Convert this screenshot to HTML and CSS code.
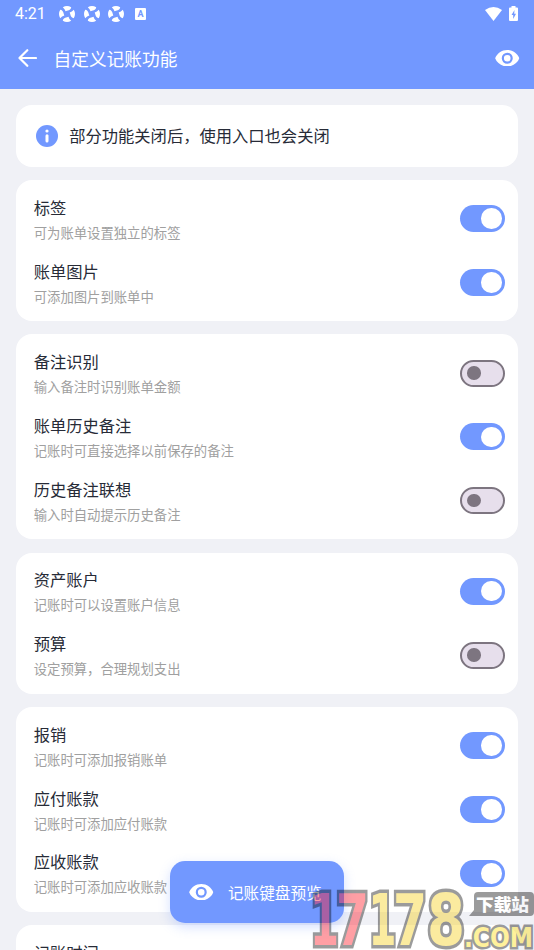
FILE: index.html
```html
<!DOCTYPE html>
<html lang="zh-CN">
<head>
<meta charset="utf-8">
<title>自定义记账功能</title>
<link rel="stylesheet" href="styles.css">
</head>
<body>
<svg class="defs" aria-hidden="true">
  <symbol id="eye" viewBox="1 4.5 22 15"><path d="M12 4.5C7 4.5 2.73 7.61 1 12c1.73 4.39 6 7.5 11 7.5s9.27-3.11 11-7.5c-1.73-4.39-6-7.5-11-7.5zM12 17a5 5 0 1 1 0-10 5 5 0 0 1 0 10zm0-8a3 3 0 1 0 0 6 3 3 0 0 0 0-6z"/></symbol>
  <symbol id="swirl" viewBox="-8 -8 16 16"><path id="blade" d="M-4.200-6.800Q0-9.200 4.200-6.800Q4-4 0-3.200L-1.500-2.700Q-2-5-4.200-6.800z"/><use href="#blade" transform="rotate(90)"/><use href="#blade" transform="rotate(180)"/><use href="#blade" transform="rotate(270)"/></symbol>
</svg>
<header class="top">
  <div class="status">
    <span class="time">4:21</span>
    <svg class="app"><use href="#swirl"/></svg>
    <svg class="app"><use href="#swirl"/></svg>
    <svg class="app"><use href="#swirl"/></svg>
    <span class="abox">A</span>
    <svg class="wifi" viewBox="0 0 17 14"><path d="M0 3Q8.500-3 17 3L8.500 14z"/></svg>
    <svg class="battery" viewBox="0 0 9 15"><path d="M2.500 0h4v1.500H8a1 1 0 0 1 1 1V14a1 1 0 0 1-1 1H1a1 1 0 0 1-1-1V2.500a1 1 0 0 1 1-1h1.500z"/><path fill="#7298ff" d="M5.500 4L2.500 9h1.700v4L7 7.800H5.200z"/></svg>
  </div>
  <div class="bar">
    <svg class="back" viewBox="0 0 19 18"><path d="M9.300 1.200L1.500 9l7.800 7.800M1.500 9H18"/></svg>
    <h1>自定义记账功能</h1>
    <svg class="eye"><use href="#eye"/></svg>
  </div>
</header>
<main>
  <section class="card notice">
    <svg class="info" viewBox="0 0 22 22"><circle cx="11" cy="11" r="11" fill="#7298ff"/><circle cx="11" cy="6" r="1.600"/><rect x="9.500" y="9.200" width="3" height="8.300" rx="1.500"/></svg>
    <span>部分功能关闭后，使用入口也会关闭</span>
  </section>
  <section class="card">
    <div class="row"><div><h2>标签</h2><p>可为账单设置独立的标签</p></div><i class="switch on"></i></div>
    <div class="row"><div><h2>账单图片</h2><p>可添加图片到账单中</p></div><i class="switch on"></i></div>
  </section>
  <section class="card">
    <div class="row"><div><h2>备注识别</h2><p>输入备注时识别账单金额</p></div><i class="switch"></i></div>
    <div class="row"><div><h2>账单历史备注</h2><p>记账时可直接选择以前保存的备注</p></div><i class="switch on"></i></div>
    <div class="row"><div><h2>历史备注联想</h2><p>输入时自动提示历史备注</p></div><i class="switch"></i></div>
  </section>
  <section class="card">
    <div class="row"><div><h2>资产账户</h2><p>记账时可以设置账户信息</p></div><i class="switch on"></i></div>
    <div class="row"><div><h2>预算</h2><p>设定预算，合理规划支出</p></div><i class="switch"></i></div>
  </section>
  <section class="card">
    <div class="row"><div><h2>报销</h2><p>记账时可添加报销账单</p></div><i class="switch on"></i></div>
    <div class="row"><div><h2>应付账款</h2><p>记账时可添加应付账款</p></div><i class="switch on"></i></div>
    <div class="row"><div><h2>应收账款</h2><p>记账时可添加应收账款</p></div><i class="switch on"></i></div>
  </section>
  <section class="card">
    <div class="row top-row"><h2>记账时间</h2></div>
  </section>
</main>
<button class="preview"><svg class="eye"><use href="#eye"/></svg><span>记账键盘预览</span></button>
<svg class="mark" viewBox="308 886 226 64">
  <g class="digits">
    <text class="red" x="310" y="945" textLength="29" lengthAdjust="spacingAndGlyphs">1</text>
    <text class="red" x="336" y="945" textLength="33" lengthAdjust="spacingAndGlyphs">7</text>
    <text x="368.500" y="945" textLength="28" lengthAdjust="spacingAndGlyphs">1</text>
    <text x="393" y="945" textLength="34" lengthAdjust="spacingAndGlyphs">7</text>
    <text x="427" y="945" textLength="38" lengthAdjust="spacingAndGlyphs">8</text>
  </g>
  <path class="bubble" d="M478 892h52q4 0 4 4v16q0 4-4 4h-61l5-6V896q0-4 4-4z"/>
  <text class="com" x="464" y="947" textLength="69" lengthAdjust="spacingAndGlyphs">.COM</text>
  <text class="site" x="476" y="911" textLength="53" lengthAdjust="spacingAndGlyphs">下载站</text>
</svg>
</body>
</html>
```
FILE: styles.css
```css
* { box-sizing: border-box; }
html { overflow: hidden; }
body {
  margin: 0;
  height: 950px;
  overflow: hidden;
  position: relative;
  background: #f0f1f6;
  color: #272b37;
  font-family: "Noto Sans CJK SC", sans-serif;
}
h1, h2, p { margin: 0; font-weight: 400; }
svg { display: block; flex: none; fill: #fff; }
.defs { position: absolute; width: 0; height: 0; }
.top { height: 89px; background: #7298ff; color: #fff; }
.status { height: 27px; padding: 0 16px 0 15px; display: flex; align-items: center; }
.time { width: 44px; font: 400 16px/27px Roboto, sans-serif; }
.app { width: 16px; height: 16px; margin-right: 8.500px; }
.abox {
  width: 11px;
  height: 12px;
  margin-left: 2.500px;
  border-radius: 1px;
  background: #fff;
  color: #7298ff;
  font: 700 9px/12px Roboto, sans-serif;
  text-align: center;
}
.wifi { width: 17px; height: 14px; margin-left: auto; margin-right: 7px; }
.battery { width: 9px; height: 15px; }
.bar { height: 62px; display: flex; align-items: center; padding: 0 14.500px 0 18px; }
.back { width: 19px; height: 18px; margin-right: 16.500px; fill: none; stroke: #fff; stroke-width: 2.200; stroke-linecap: round; stroke-linejoin: round; }
h1 { font-size: 17.700px; line-height: 28px; }
.eye { width: 24.500px; height: 16.500px; }
.bar .eye { margin-left: auto; }
main { height: 861px; overflow: hidden; padding: 15.700px 15.700px 0; display: flex; flex-direction: column; gap: 13.400px; }
.card { flex: none; padding: 6.650px 13.400px 6.650px 18px; border-radius: 16px; background: #fff; }
.notice { height: 62px; display: flex; align-items: center; gap: 11.500px; padding-left: 20px; font-size: 16.300px; }
.notice span { padding-bottom: 2px; }
.info { width: 22px; height: 22px; }
.row { height: 63.850px; display: flex; align-items: center; justify-content: space-between; }
.top-row { align-items: flex-start; padding-top: 6px; }
h2 { font-size: 16.300px; line-height: 28px; }
p { font-size: 13.350px; line-height: 23px; color: #a0a0a0; }
.row > div { padding-bottom: .6px; }
.switch { width: 44.500px; height: 27px; border: 2px solid #7d7580; border-radius: 14px; background: #e7dfec; display: flex; align-items: center; padding: 0 4.800px; }
.switch::before { content: ""; width: 13.500px; height: 13.500px; border-radius: 50%; background: #7d7580; }
.switch.on { border: 0; background: #7298ff; justify-content: flex-end; padding: 0 3px; }
.switch.on::before { width: 20.500px; height: 20.500px; background: #fff; }
.preview {
  position: absolute;
  left: 170px;
  top: 861px;
  width: 173.500px;
  height: 62px;
  padding: 0 0 0 19px;
  display: flex;
  align-items: center;
  gap: 14.500px;
  border: 0;
  border-radius: 15px;
  background: #7298ff;
  color: #fff;
  font: 15.600px "Noto Sans CJK SC", sans-serif;
  box-shadow: 0 4px 12px rgba(114, 152, 255, .3);
}
.preview span { padding-bottom: 1px; }
.mark { position: absolute; left: 308px; top: 886px; width: 226px; height: 64px; opacity: .39; }
.mark text { paint-order: stroke; stroke: #000; stroke-linejoin: miter; }
.digits { font: 700 72px "DejaVu Sans", sans-serif; fill: #f7cd0a; stroke-width: 7px; }
.digits .red { fill: #ff0a18; }
.bubble { fill: #000; }
.mark .com { font: 700 27px "DejaVu Sans", sans-serif; fill: #ffdc00; stroke-width: 5px; }
.mark .site { font: 900 17.500px "Noto Sans CJK SC", sans-serif; fill: #fff; stroke: none; }
```
